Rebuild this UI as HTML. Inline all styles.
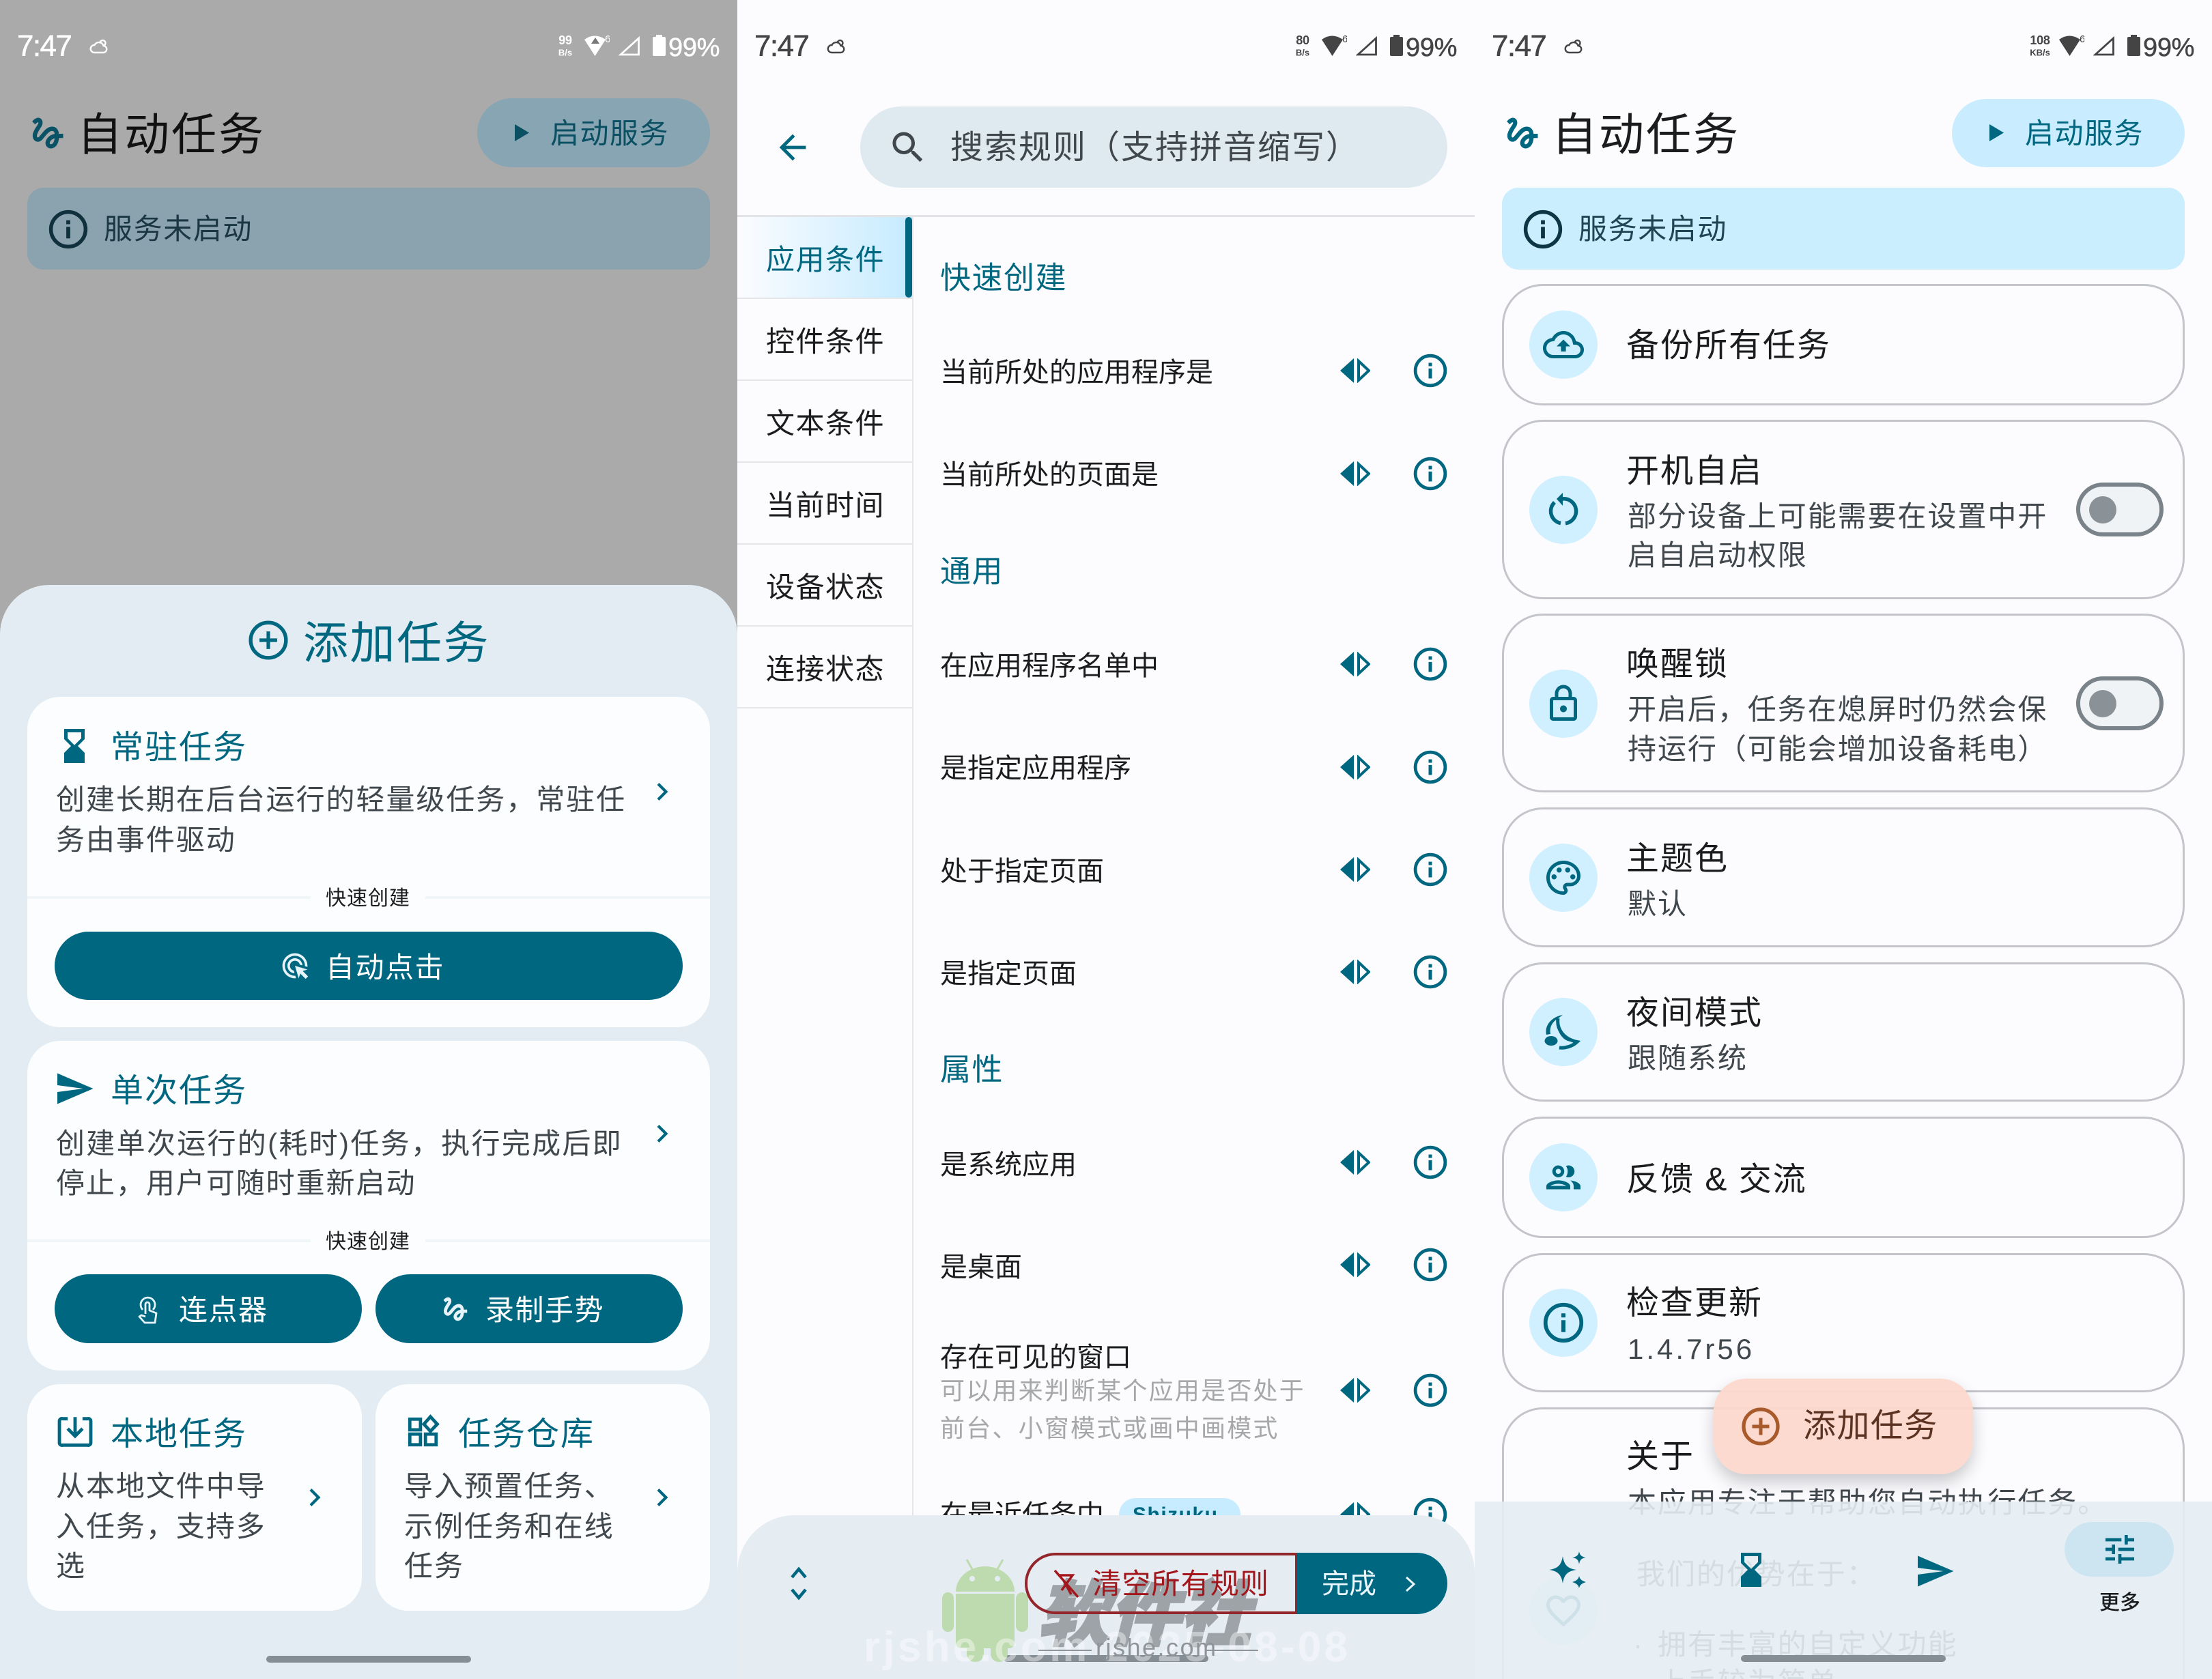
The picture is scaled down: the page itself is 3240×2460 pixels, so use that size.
<!DOCTYPE html>
<html><head><meta charset="utf-8"><style>
html,body{margin:0;padding:0;background:#fcfcff}
body{width:3240px;height:2460px;position:relative;overflow:hidden;font-family:"Liberation Sans","Noto Sans CJK SC",sans-serif;color:#1a1c1e}
.p{position:absolute;top:0;width:1080px;height:2460px;overflow:hidden;background:#fcfcff}
.t{position:absolute;white-space:nowrap;line-height:1;transform:translateY(calc(-50% + 2px))}
.b{position:absolute;box-sizing:border-box}
.i{position:absolute;fill:currentColor;overflow:visible}
.s{fill:none;stroke:currentColor}
.h66{font-size:66px;letter-spacing:3px}
.h48{font-size:48px;letter-spacing:2px}
.b42{font-size:42px;letter-spacing:1.95px;color:#41484d;transform:translateY(-50%)}
.w42{font-size:42px;letter-spacing:1.5px;color:#fff}
.pri{color:#006781}
.card{position:absolute;left:40px;width:1000px;background:#fbfdff;border-radius:48px}
.btn{position:absolute;background:#006781;border-radius:51px}
.dv{position:absolute;left:40px;width:1000px;height:4px;background:#f0f5f8}
.lb{position:absolute;left:455px;width:168px;height:40px;background:#fbfdff;text-align:center;font-size:30px;line-height:40px;color:#1a1c1e;letter-spacing:1px}
.o{position:absolute;left:40px;width:1000px;box-sizing:border-box;border:3px solid #c3c5ca;border-radius:60px}
.c{position:absolute;left:80px;width:100px;height:100px;border-radius:50%;background:#d0f0ff;color:#006781}
.r{font-size:40px;color:#1a1c1e;left:297px}
.g{font-size:45px;letter-spacing:1.5px;color:#006781;left:297px}
.side{position:absolute;left:0;width:256px;height:2px;background:#e4e6ea}
.st{left:42px;font-size:42px;letter-spacing:1.5px;color:#1a1c1e}
.home{position:absolute;left:390px;width:300px;height:10px;border-radius:5px;background:#858e94}
.time{left:25px;top:66px;font-size:44px;letter-spacing:-1.6px;-webkit-text-stroke:.5px currentColor}
.pct{left:979px;top:68px;font-size:38px;letter-spacing:-.3px;-webkit-text-stroke:.5px currentColor}
.sa{font-size:18px;font-weight:bold;text-align:center;letter-spacing:-.3px}
.sb{font-size:13px;font-weight:bold;text-align:center}
</style></head><body>
<svg width="0" height="0" style="position:absolute">
<defs>
<symbol id="info" viewBox="0 0 24 24"><circle cx="12" cy="12" r="10.500" fill="none" stroke="currentColor" stroke-width="2.300"/><rect x="10.800" y="10.500" width="2.400" height="7"/><rect x="10.800" y="6.500" width="2.400" height="2.400"/></symbol>
<symbol id="gest" viewBox="0 0 24 24"><path d="M4.590 6.890c.7-.71 1.400-1.350 1.710-1.220.5.2 0 1.030-.3 1.520-.25.42-2.860 3.890-2.860 6.310 0 1.280.48 2.340 1.340 2.980.75.56 1.740.73 2.640.46 1.070-.31 1.950-1.400 3.060-2.770 1.210-1.490 2.830-3.440 4.080-3.440 1.630 0 1.650 1.010 1.760 1.790-3.780.64-5.380 3.670-5.380 5.370 0 1.700 1.440 3.090 3.210 3.090 1.630 0 4.290-1.330 4.690-6.100H21v-2.500h-2.470c-.15-1.650-1.090-4.200-4.030-4.200-2.250 0-4.180 1.910-4.940 2.840-.58.73-2.060 2.480-2.290 2.720-.25.3-.68.84-1.110.84-.45 0-.72-.83-.36-1.920.35-1.090 1.400-2.860 1.850-3.520.78-1.140 1.300-1.920 1.300-3.280C8.950 3.690 7.310 3 6.440 3 5.120 3 3.970 4 3.720 4.250c-.36.36-.66.66-.88.93l1.750 1.710zm9.290 11.660c-.31 0-.74-.26-.74-.72 0-.6.73-2.200 2.870-2.760-.3 2.690-1.430 3.480-2.130 3.480z"/></symbol>
<symbol id="hour" viewBox="0 0 24 24"><path d="M18 22l-.01-6L14 12l3.990-4.010L18 2H6v6l4 4-4 3.990V22h12zM8 7.500V4h8v3.500l-4 4-4-4z"/></symbol>
<symbol id="send" viewBox="0 0 24 24"><path d="M2.010 21L23 12 2.010 3 2 10l15 2-15 2z"/></symbol>
<symbol id="add" viewBox="0 0 24 24"><circle cx="12" cy="12" r="10" fill="none" stroke="currentColor" stroke-width="2.100"/><path d="M11 7h2v4h4v2h-4v4h-2v-4H7v-2h4z"/></symbol>
<symbol id="chev" viewBox="0 0 18 28"><polyline points="3,2.500 14.500,14 3,25.500" fill="none" stroke="currentColor" stroke-width="4.200"/></symbol>
<symbol id="touch" viewBox="0 0 60 70"><path fill="none" stroke="currentColor" stroke-width="2.800" stroke-linejoin="round" d="M21 36A10.500 10.500 0 1 1 36 36M25 42V28a3 3 0 0 1 6 0V37L41 41 39 55H24L16 46 19 44 25 46"/></symbol>
<symbol id="ads" viewBox="0 0 24 24"><path d="M11.710,17.990C8.530,17.840,6,15.220,6,12c0-3.310,2.690-6,6-6c3.220,0,5.840,2.530,5.990,5.710l-2.100-0.630C15.480,9.310,13.890,8,12,8 c-2.210,0-4,1.790-4,4c0,1.890,1.310,3.480,3.080,3.890L11.710,17.990z M22,12c0,0.300-0.010,0.600-0.040,0.900l-1.970-0.590C20,12.210,20,12.100,20,12 c0-4.420-3.580-8-8-8s-8,3.580-8,8s3.580,8,8,8c0.100,0,0.210,0,0.310-0.010l0.590,1.970C12.600,21.990,12.300,22,12,22C6.480,22,2,17.520,2,12 C2,6.480,6.480,2,12,2S22,6.480,22,12z M18.230,16.260L22,15l-10-3l3,10l1.260-3.770l4.270,4.270l1.970-1.970L18.230,16.260z"/></symbol>
<symbol id="inbox" viewBox="0 0 24 24"><path fill="none" stroke="currentColor" stroke-width="2" d="M7.500 4H4.500A1.500 1.500 0 0 0 2.500 5.500v13A1.500 1.500 0 0 0 4.500 20h15a1.500 1.500 0 0 0 2-1.500v-13A1.500 1.500 0 0 0 19.500 4h-3M12 3v11M7.500 10l4.500 4.500 4.500-4.500"/></symbol>
<symbol id="widg" viewBox="0 0 24 24"><g fill="none" stroke="currentColor" stroke-width="2.300"><rect x="3" y="3.500" width="7.500" height="7.500"/><rect x="3" y="14" width="7.500" height="7.500"/><rect x="14" y="14" width="7.500" height="7.500"/><polygon points="17.500,1.800 22.300,7 17.500,12 12.900,7"/></g></symbol>
<symbol id="search" viewBox="0 0 24 24"><path d="M15.500 14h-.79l-.28-.27C15.410 12.590 16 11.110 16 9.500 16 5.910 13.090 3 9.500 3S3 5.910 3 9.500 5.910 16 9.500 16c1.610 0 3.090-.59 4.230-1.570l.27.28v.79l5 4.990L20.490 19l-4.990-5zm-6 0C7.010 14 5 11.990 5 9.500S7.010 5 9.500 5 14 7.010 14 9.500 11.990 14 9.500 14z"/></symbol>
<symbol id="back" viewBox="0 0 24 24"><path d="M20 11H7.830l5.590-5.590L12 4l-8 8 8 8 1.410-1.410L7.830 13H20v-2z"/></symbol>
<symbol id="swap" viewBox="0 0 44 36"><polygon points="20,0 20,36 0,18"/><polygon points="27,4 27,32 42,18" fill="none" stroke="currentColor" stroke-width="4"/></symbol>
<symbol id="cloud" viewBox="0 0 24 24"><path d="M19.350 10.040C18.670 6.590 15.640 4 12 4 9.110 4 6.600 5.640 5.350 8.040 2.340 8.360 0 10.910 0 14c0 3.310 2.690 6 6 6h13c2.760 0 5-2.240 5-5 0-2.640-2.050-4.780-4.650-4.960zM19 18H6c-2.210 0-4-1.790-4-4 0-2.050 1.530-3.760 3.560-3.970l1.070-.11.500-.95C8.080 7.140 9.940 6 12 6c2.620 0 4.880 1.860 5.390 4.430l.3 1.500 1.530.11c1.560.1 2.780 1.410 2.780 2.960 0 1.650-1.350 3-3 3zM8 13h2.550v3h2.900v-3H16l-4-4z"/></symbol>
<symbol id="replay" viewBox="0 0 120 120"><path fill="none" stroke="currentColor" stroke-width="5.500" d="M58 42A18 18 0 1 1 63 77.800M56 77.600A18 18 0 0 1 47 47"/><polygon points="59,33 59,52 50,42"/></symbol>
<symbol id="lock" viewBox="0 0 24 24"><path d="M18 8h-1V6c0-2.760-2.240-5-5-5S7 3.240 7 6v2H6c-1.100 0-2 .9-2 2v10c0 1.100.9 2 2 2h12c1.100 0 2-.9 2-2V10c0-1.100-.9-2-2-2zM9 6c0-1.660 1.340-3 3-3s3 1.340 3 3v2H9V6zm9 14H6V10h12v10zm-6-3c1.100 0 2-.9 2-2s-.9-2-2-2-2 .9-2 2 .9 2 2 2z"/></symbol>
<symbol id="pal" viewBox="0 0 24 24"><path d="M12 22C6.490 22 2 17.510 2 12S6.490 2 12 2s10 4.040 10 9c0 3.310-2.690 6-6 6h-1.770c-.28 0-.5.22-.5.500 0 .12.05.23.13.33.41.47.64 1.060.64 1.670 0 1.380-1.120 2.500-2.500 2.500zm0-18c-4.410 0-8 3.590-8 8s3.590 8 8 8c.28 0 .5-.22.5-.5 0-.16-.08-.28-.14-.35-.41-.46-.63-1.050-.63-1.650 0-1.380 1.120-2.500 2.500-2.500H16c2.210 0 4-1.790 4-4 0-3.860-3.590-7-8-7z"/><circle cx="6.500" cy="11.500" r="1.500"/><circle cx="9.500" cy="7.500" r="1.500"/><circle cx="14.500" cy="7.500" r="1.500"/><circle cx="17.500" cy="11.500" r="1.500"/></symbol>
<symbol id="moon" viewBox="0 0 120 120"><path d="M59 32C43 35 32 47 35 61L41 60C39 50 44 42 51 38 49 53 60 68 81 71 75 71 70 72 64 69 54 63 50 52 51 38Z" /><path fill="none" stroke="currentColor" stroke-width="5" d="M52 37C50 52 59 67 80 71.500C73 78 63 81 54 80"/><ellipse cx="42" cy="70" rx="9.500" ry="7"/></symbol>
<symbol id="ppl" viewBox="0 0 24 24"><path d="M9 13.750c-2.340 0-7 1.170-7 3.500V19h14v-1.750c0-2.330-4.660-3.500-7-3.500zM4.340 17c.84-.58 2.870-1.250 4.660-1.250s3.820.67 4.660 1.250H4.340zM9 12c1.930 0 3.500-1.570 3.500-3.500S10.930 5 9 5 5.500 6.570 5.500 8.500 7.070 12 9 12zm0-5c.83 0 1.500.67 1.500 1.500S9.830 10 9 10s-1.500-.67-1.500-1.500S8.170 7 9 7zm7.040 6.810c1.160.84 1.960 1.960 1.960 3.440V19h4v-1.750c0-2.020-3.500-3.170-5.960-3.440zM15 12c1.930 0 3.500-1.570 3.500-3.500S16.930 5 15 5c-.54 0-1.040.13-1.500.35.63.89 1 1.980 1 3.150s-.37 2.260-1 3.150c.46.22.96.35 1.500.35z"/></symbol>
<symbol id="heart" viewBox="0 0 24 24"><path d="M16.500 3c-1.740 0-3.410.81-4.500 2.090C10.910 3.810 9.240 3 7.500 3 4.420 3 2 5.420 2 8.500c0 3.780 3.400 6.860 8.550 11.540L12 21.350l1.450-1.320C18.600 15.360 22 12.280 22 8.500 22 5.420 19.580 3 16.500 3zm-4.400 15.550l-.1.100-.1-.1C7.140 14.240 4 11.390 4 8.500 4 6.500 5.500 5 7.500 5c1.540 0 3.040.99 3.570 2.360h1.870C13.460 5.990 14.960 5 16.500 5c2 0 3.500 1.500 3.500 3.500 0 2.890-3.140 5.740-7.900 10.050z"/></symbol>
<symbol id="tune" viewBox="0 0 24 24"><path d="M3 17v2h6v-2H3zM3 5v2h10V5H3zm10 16v-2h8v-2h-8v-2h-2v6h2zM7 9v2H3v2h4v2h2V9H7zm14 4v-2H11v2h10zm-6-4h2V7h4V5h-4V3h-2v6z"/></symbol>
<symbol id="spark" viewBox="0 0 54 54"><path d="M20 7 C22 20 27 25 40 27 C27 29 22 34 20 47 C18 34 13 29 0 27 C13 25 18 20 20 7z"/><path d="M44 0 C45 6 48 8 54 9 C48 10 45 12 44 19 C43 12 40 10 34 9 C40 8 43 6 44 0z"/><path d="M44 36 C45 41 48 43 54 45 C48 47 45 49 44 54 C43 49 40 47 34 45 C40 43 43 41 44 36z"/></symbol>
<symbol id="wcloud" viewBox="0 0 27 24"><path fill="none" stroke="currentColor" stroke-width="2.400" d="M7 22h13a5 5 0 0 0 .5-10 7 7 0 0 0-13-1A5.500 5.500 0 0 0 7 22zM15.500 7.500a4 4 0 1 1 6 4"/></symbol>
<symbol id="wifi" viewBox="0 0 37 32"><path d="M0 8 Q15 -3 31 8 L15.500 32 Z"/><text x="30" y="12" font-size="15" font-family="Liberation Sans">6</text></symbol>
<symbol id="sig" viewBox="0 0 32 29"><path fill="none" stroke="currentColor" stroke-width="2.800" d="M29.500 3V27H3z"/></symbol>
<symbol id="bat" viewBox="0 0 19 31"><path d="M5 0h9v3h3a2 2 0 0 1 2 2v24a2 2 0 0 1-2 2H2a2 2 0 0 1-2-2V5a2 2 0 0 1 2-2h3z"/></symbol>
</defs></svg>

<!-- PANEL 1 -->
<div class="p" style="left:0;background:#aaaaaa">
<div class="t time" style="color:#fff">7:47</div>
<svg class="i" style="left:131px;top:55px;width:27px;height:24px;color:#fff"><use href="#wcloud"/></svg>
<div class="t sa" style="left:812px;top:57px;color:#fff;width:32px">99</div>
<div class="t sb" style="left:812px;top:75px;color:#fff;width:32px">B/s</div>
<svg class="i" style="left:856px;top:50px;width:37px;height:32px;color:#fff"><use href="#wifi"/></svg>
<svg class="i" style="left:866px;top:55px;width:12px;height:9px;fill:#777"><polygon points="6,0 12,9 0,9"/></svg>
<svg class="i" style="left:906px;top:53px;width:32px;height:29px;color:#fff"><use href="#sig"/></svg>
<svg class="i" style="left:956px;top:51px;width:19px;height:31px;color:#fff"><use href="#bat"/></svg>
<div class="t pct" style="color:#fff">99%</div>

<svg class="i" style="left:40px;top:165px;width:60px;height:60px;color:#0a5266"><use href="#gest"/></svg>
<div class="t h66" style="left:113px;top:195px;color:#111">自动任务</div>
<div class="b" style="left:699px;top:144px;width:341px;height:101px;background:#88a5b3;border-radius:51px"></div>
<svg class="i" style="left:754px;top:182px;width:21px;height:25px;color:#0a4f62"><polygon points="0,0 21,12.500 0,25"/></svg>
<div class="t w42" style="left:806px;top:194px;color:#0a4f62">启动服务</div>
<div class="b" style="left:40px;top:275px;width:1000px;height:120px;background:#8ba3af;border-radius:24px"></div>
<svg class="i" style="left:71px;top:307px;width:58px;height:58px;color:#10303e"><use href="#info"/></svg>
<div class="t b42" style="left:152px;top:336px;color:#1b3744;letter-spacing:1.6px">服务未启动</div>

<div class="b" style="left:0;top:857px;width:1080px;height:1603px;background:#e2ecf2;border-radius:72px 72px 0 0"></div>
<svg class="i pri" style="left:362px;top:907px;width:62px;height:62px"><use href="#add"/></svg>
<div class="t h66 pri" style="left:444px;top:940px;letter-spacing:2.500px">添加任务</div>

<div class="card" style="top:1021px;height:484px"></div>
<svg class="i pri" style="left:79px;top:1063px;width:60px;height:60px"><use href="#hour"/></svg>
<div class="t h48 pri" style="left:162px;top:1094px">常驻任务</div>
<div class="t b42" style="left:82px;top:1172px">创建长期在后台运行的轻量级任务，常驻任</div>
<div class="t b42" style="left:82px;top:1231px">务由事件驱动</div>
<svg class="i pri" style="left:961px;top:1146px;width:18px;height:28px"><use href="#chev"/></svg>
<div class="dv" style="top:1313px"></div><div class="lb" style="top:1297px">快速创建</div>
<div class="btn" style="left:80px;top:1365px;width:920px;height:100px"></div>
<svg class="i" style="left:410px;top:1393px;width:44px;height:44px;color:#e6f4fa"><use href="#ads"/></svg>
<div class="t w42" style="left:477px;top:1416px">自动点击</div>

<div class="card" style="top:1525px;height:483px"></div>
<svg class="i pri" style="left:79px;top:1565px;width:60px;height:60px"><use href="#send"/></svg>
<div class="t h48 pri" style="left:162px;top:1597px">单次任务</div>
<div class="t b42" style="left:82px;top:1676px;letter-spacing:2.300px">创建单次运行的(耗时)任务，执行完成后即</div>
<div class="t b42" style="left:82px;top:1734px">停止，用户可随时重新启动</div>
<svg class="i pri" style="left:961px;top:1647px;width:18px;height:28px"><use href="#chev"/></svg>
<div class="dv" style="top:1816px"></div><div class="lb" style="top:1800px">快速创建</div>
<div class="btn" style="left:80px;top:1867px;width:450px;height:101px"></div>
<svg class="i" style="left:188px;top:1883px;width:60px;height:70px;color:#e6f4fa"><use href="#touch"/></svg>
<div class="t w42" style="left:262px;top:1918px">连点器</div>
<div class="btn" style="left:550px;top:1867px;width:450px;height:101px"></div>
<svg class="i" style="left:644px;top:1895px;width:46px;height:46px;color:#e6f4fa"><use href="#gest"/></svg>
<div class="t w42" style="left:711px;top:1918px">录制手势</div>

<div class="card" style="top:2028px;width:490px;height:332px"></div>
<svg class="i pri" style="left:81px;top:2069px;width:58px;height:58px"><use href="#inbox"/></svg>
<div class="t h48 pri" style="left:162px;top:2100px">本地任务</div>
<div class="t b42" style="left:82px;top:2178px">从本地文件中导</div>
<div class="t b42" style="left:82px;top:2237px">入任务，支持多</div>
<div class="t b42" style="left:82px;top:2295px">选</div>
<svg class="i pri" style="left:452px;top:2180px;width:18px;height:28px"><use href="#chev"/></svg>

<div class="card" style="top:2028px;left:550px;width:490px;height:332px"></div>
<svg class="i pri" style="left:594px;top:2072px;width:50px;height:50px"><use href="#widg"/></svg>
<div class="t h48 pri" style="left:671px;top:2100px">任务仓库</div>
<div class="t b42" style="left:592px;top:2178px">导入预置任务、</div>
<div class="t b42" style="left:592px;top:2237px">示例任务和在线</div>
<div class="t b42" style="left:592px;top:2295px">任务</div>
<svg class="i pri" style="left:961px;top:2180px;width:18px;height:28px"><use href="#chev"/></svg>
<div class="home" style="top:2426px"></div>
</div>

<!-- PANEL 2 -->
<div class="p" style="left:1080px">
<div class="t time" style="color:#444">7:47</div>
<svg class="i" style="left:131px;top:55px;width:27px;height:24px;color:#444"><use href="#wcloud"/></svg>
<div class="t sa" style="left:812px;top:57px;color:#444;width:32px">80</div>
<div class="t sb" style="left:812px;top:75px;color:#444;width:32px">B/s</div>
<svg class="i" style="left:856px;top:50px;width:37px;height:32px;color:#444"><use href="#wifi"/></svg>
<svg class="i" style="left:906px;top:53px;width:32px;height:29px;color:#444"><use href="#sig"/></svg>
<svg class="i" style="left:956px;top:51px;width:19px;height:31px;color:#444"><use href="#bat"/></svg>
<div class="t pct" style="color:#444">99%</div>

<svg class="i pri" style="left:52px;top:187px;width:58px;height:58px"><use href="#back"/></svg>
<div class="b" style="left:180px;top:156px;width:860px;height:119px;background:#dfeaf0;border-radius:60px"></div>
<svg class="i" style="left:220px;top:186px;width:60px;height:60px;color:#41484d"><use href="#search"/></svg>
<div class="t" style="left:312px;top:215px;font-size:48px;letter-spacing:2px;color:#41484d">搜索规则（支持拼音缩写）</div>
<div class="b" style="left:0;top:315px;width:1080px;height:3px;background:#e2e4e8"></div>
<div class="b" style="left:256px;top:318px;width:2px;height:1902px;background:#e4e6ea"></div>
<div class="b" style="left:0;top:318px;width:256px;height:118px;background:linear-gradient(90deg,#fcfcff,#c5ebff)"></div>
<div class="b" style="left:246px;top:318px;width:10px;height:118px;background:#006781;border-radius:5px"></div>
<div class="side" style="top:436px"></div><div class="side" style="top:556px"></div><div class="side" style="top:676px"></div><div class="side" style="top:796px"></div><div class="side" style="top:916px"></div><div class="side" style="top:1036px"></div>
<div class="t st pri" style="top:379px;color:#006781">应用条件</div>
<div class="t st" style="top:499px">控件条件</div>
<div class="t st" style="top:619px">文本条件</div>
<div class="t st" style="top:739px">当前时间</div>
<div class="t st" style="top:859px">设备状态</div>
<div class="t st" style="top:979px">连接状态</div>

<div class="t g" style="top:405px">快速创建</div>
<div class="t r" style="top:544px">当前所处的应用程序是</div>
<div class="t r" style="top:694px">当前所处的页面是</div>
<div class="t g" style="top:835px">通用</div>
<div class="t r" style="top:974px">在应用程序名单中</div>
<div class="t r" style="top:1124px">是指定应用程序</div>
<div class="t r" style="top:1275px">处于指定页面</div>
<div class="t r" style="top:1425px">是指定页面</div>
<div class="t g" style="top:1565px">属性</div>
<div class="t r" style="top:1705px">是系统应用</div>
<div class="t r" style="top:1855px">是桌面</div>
<div class="t r" style="top:1987px">存在可见的窗口</div>
<div class="t" style="left:297px;top:2036px;font-size:36px;letter-spacing:2.200px;color:#a5a7a9">可以用来判断某个应用是否处于</div>
<div class="t" style="left:297px;top:2091px;font-size:36px;letter-spacing:2.200px;color:#a5a7a9">前台、小窗模式或画中画模式</div>
<div class="t r" style="top:2218px">在最近任务中</div>
<div class="b" style="left:559px;top:2195px;width:178px;height:60px;background:#c8ecff;border-radius:24px"></div>
<div class="t" style="left:579px;top:2218px;font-size:30px;font-weight:bold;letter-spacing:1.500px;color:#006781">Shizuku</div>

<svg class="i pri" style="left:883px;top:525px;width:44px;height:36px"><use href="#swap"/></svg><svg class="i pri" style="left:988px;top:518px;width:54px;height:50px"><use href="#info"/></svg>
<svg class="i pri" style="left:883px;top:676px;width:44px;height:36px"><use href="#swap"/></svg><svg class="i pri" style="left:988px;top:669px;width:54px;height:50px"><use href="#info"/></svg>
<svg class="i pri" style="left:883px;top:955px;width:44px;height:36px"><use href="#swap"/></svg><svg class="i pri" style="left:988px;top:948px;width:54px;height:50px"><use href="#info"/></svg>
<svg class="i pri" style="left:883px;top:1106px;width:44px;height:36px"><use href="#swap"/></svg><svg class="i pri" style="left:988px;top:1099px;width:54px;height:50px"><use href="#info"/></svg>
<svg class="i pri" style="left:883px;top:1256px;width:44px;height:36px"><use href="#swap"/></svg><svg class="i pri" style="left:988px;top:1249px;width:54px;height:50px"><use href="#info"/></svg>
<svg class="i pri" style="left:883px;top:1406px;width:44px;height:36px"><use href="#swap"/></svg><svg class="i pri" style="left:988px;top:1399px;width:54px;height:50px"><use href="#info"/></svg>
<svg class="i pri" style="left:883px;top:1685px;width:44px;height:36px"><use href="#swap"/></svg><svg class="i pri" style="left:988px;top:1678px;width:54px;height:50px"><use href="#info"/></svg>
<svg class="i pri" style="left:883px;top:1835px;width:44px;height:36px"><use href="#swap"/></svg><svg class="i pri" style="left:988px;top:1828px;width:54px;height:50px"><use href="#info"/></svg>
<svg class="i pri" style="left:883px;top:2019px;width:44px;height:36px"><use href="#swap"/></svg><svg class="i pri" style="left:988px;top:2012px;width:54px;height:50px"><use href="#info"/></svg>
<svg class="i pri" style="left:883px;top:2201px;width:44px;height:36px"><use href="#swap"/></svg><svg class="i pri" style="left:988px;top:2194px;width:54px;height:50px"><use href="#info"/></svg>

<div class="b" style="left:0;top:2220px;width:1080px;height:240px;background:#e5edf3;border-radius:84px 84px 0 0"></div>
<svg class="i pri" style="left:78px;top:2296px;width:24px;height:48px"><polyline points="2,15 12,3 22,15" fill="none" stroke="currentColor" stroke-width="4.500"/><polyline points="2,33 12,45 22,33" fill="none" stroke="currentColor" stroke-width="4.500"/></svg>
<div class="home" style="top:2425px"></div>
<svg class="i" style="left:300px;top:2285px;width:126px;height:150px;fill:#bddbae"><path d="M20 47A43 37 0 0 1 106 47Z"/><path d="M36 0 44 14M89 0 81 14" stroke="#bddbae" stroke-width="3" fill="none"/><path d="M20 50H106V122a8 8 0 0 1-8 8H28a8 8 0 0 1-8-8Z"/><rect x="0" y="48" width="17" height="58" rx="8.500"/><rect x="108" y="48" width="18" height="58" rx="9"/><rect x="36" y="118" width="25" height="32" rx="12"/><rect x="71" y="118" width="25" height="32" rx="12"/><circle cx="44" cy="28" r="4" fill="#e5edf3"/><circle cx="81" cy="28" r="4" fill="#e5edf3"/></svg>
<div class="t" style="left:440px;top:2355px;font-size:104px;font-weight:900;font-style:italic;color:#9ea3a8;-webkit-text-stroke:3px #9ea3a8;font-family:'Noto Sans CJK SC',sans-serif">软件社</div>
<div class="t" style="left:185px;top:2412px;font-size:62px;font-weight:bold;letter-spacing:4.300px;color:rgba(255,255,255,.42)">rjshe.com 2025-08-08</div>
<div class="b" style="left:441px;top:2417px;width:78px;height:2px;background:#8f9498"></div>
<div class="t" style="left:525px;top:2412px;font-size:36px;letter-spacing:2.500px;color:#8f9498">rjshe.com</div>
<div class="b" style="left:685px;top:2417px;width:78px;height:2px;background:#8f9498"></div>

<div class="b" style="left:421px;top:2275px;width:400px;height:90px;border:4px solid #93262b;border-right-width:4px;border-radius:45px 0 0 45px"></div>
<svg class="i" style="left:463px;top:2300px;width:40px;height:42px;color:#a3171c"><path fill="none" stroke="currentColor" stroke-width="3.500" d="M2 1L36 40M8 8H28L12 30M14 14 26 36"/></svg>
<div class="t" style="left:520px;top:2319px;font-size:42px;letter-spacing:1.200px;color:#a3171c">清空所有规则</div>
<div class="b" style="left:820px;top:2275px;width:220px;height:90px;background:#006781;border-radius:0 45px 45px 0"></div>
<div class="t" style="left:856px;top:2319px;font-size:40px;color:#eaf6fb">完成</div>
<svg class="i" style="left:978px;top:2310px;width:15px;height:22px;color:#eaf6fb"><polyline points="2,1 13,11 2,21" fill="none" stroke="currentColor" stroke-width="3"/></svg>
</div>

<!-- PANEL 3 -->
<div class="p" style="left:2160px">
<div class="t time" style="color:#444">7:47</div>
<svg class="i" style="left:131px;top:55px;width:27px;height:24px;color:#444"><use href="#wcloud"/></svg>
<div class="t sa" style="left:808px;top:57px;color:#444;width:40px">108</div>
<div class="t sb" style="left:808px;top:75px;color:#444;width:40px">KB/s</div>
<svg class="i" style="left:856px;top:50px;width:37px;height:32px;color:#444"><use href="#wifi"/></svg>
<svg class="i" style="left:906px;top:53px;width:32px;height:29px;color:#444"><use href="#sig"/></svg>
<svg class="i" style="left:956px;top:51px;width:19px;height:31px;color:#444"><use href="#bat"/></svg>
<div class="t pct" style="color:#444">99%</div>

<svg class="i pri" style="left:40px;top:165px;width:60px;height:60px"><use href="#gest"/></svg>
<div class="t h66" style="left:113px;top:195px">自动任务</div>
<div class="b" style="left:699px;top:145px;width:341px;height:100px;background:#c9edff;border-radius:50px"></div>
<svg class="i pri" style="left:754px;top:182px;width:21px;height:25px"><polygon points="0,0 21,12.500 0,25"/></svg>
<div class="t w42 pri" style="left:806px;top:194px;color:#006781">启动服务</div>
<div class="b" style="left:40px;top:275px;width:1000px;height:120px;background:#cbeeff;border-radius:24px"></div>
<svg class="i" style="left:71px;top:307px;width:58px;height:58px;color:#0d3645"><use href="#info"/></svg>
<div class="t b42" style="left:152px;top:336px;color:#1f4552;letter-spacing:1.6px">服务未启动</div>

<div class="o" style="top:416px;height:178px"></div>
<div class="c" style="top:455px"></div>
<svg class="i pri" style="left:100px;top:475px;width:60px;height:60px"><use href="#cloud"/></svg>
<div class="t h48" style="left:222px;top:505px">备份所有任务</div>

<div class="o" style="top:615px;height:263px"></div>
<div class="c" style="top:697px"></div>
<svg class="i pri" style="left:70px;top:689px;width:120px;height:120px"><use href="#replay"/></svg>
<div class="t h48" style="left:222px;top:689px">开机自启</div>
<div class="t b42" style="left:224px;top:757px">部分设备上可能需要在设置中开</div>
<div class="t b42" style="left:224px;top:814px">启自启动权限</div>
<div class="b" style="left:881px;top:707px;width:128px;height:79px;border:6px solid #7a8389;border-radius:40px;background:#eff3f6"></div>
<div class="b" style="left:900px;top:727px;width:40px;height:40px;border-radius:50%;background:#8a9298"></div>

<div class="o" style="top:899px;height:262px"></div>
<div class="c" style="top:981px"></div>
<svg class="i pri" style="left:100px;top:1001px;width:60px;height:60px"><use href="#lock"/></svg>
<div class="t h48" style="left:222px;top:972px">唤醒锁</div>
<div class="t b42" style="left:224px;top:1040px">开启后，任务在熄屏时仍然会保</div>
<div class="t b42" style="left:224px;top:1098px">持运行（可能会增加设备耗电）</div>
<div class="b" style="left:881px;top:991px;width:128px;height:79px;border:6px solid #7a8389;border-radius:40px;background:#eff3f6"></div>
<div class="b" style="left:900px;top:1011px;width:40px;height:40px;border-radius:50%;background:#8a9298"></div>

<div class="o" style="top:1183px;height:205px"></div>
<div class="c" style="top:1236px"></div>
<svg class="i pri" style="left:100px;top:1256px;width:60px;height:60px"><use href="#pal"/></svg>
<div class="t h48" style="left:222px;top:1257px">主题色</div>
<div class="t b42" style="left:224px;top:1325px">默认</div>

<div class="o" style="top:1410px;height:204px"></div>
<div class="c" style="top:1462px"></div>
<svg class="i pri" style="left:70px;top:1455px;width:120px;height:120px"><use href="#moon"/></svg>
<div class="t h48" style="left:222px;top:1483px">夜间模式</div>
<div class="t b42" style="left:224px;top:1551px">跟随系统</div>

<div class="o" style="top:1636px;height:178px"></div>
<div class="c" style="top:1675px"></div>
<svg class="i pri" style="left:100px;top:1695px;width:60px;height:60px"><use href="#ppl"/></svg>
<div class="t h48" style="left:222px;top:1727px">反馈 &amp; 交流</div>

<div class="o" style="top:1836px;height:204px"></div>
<div class="c" style="top:1888px"></div>
<svg class="i pri" style="left:100px;top:1908px;width:60px;height:60px"><use href="#info"/></svg>
<div class="t h48" style="left:222px;top:1908px">检查更新</div>
<div class="t b42" style="left:224px;top:1977px;letter-spacing:4px">1.4.7r56</div>

<div class="o" style="top:2062px;height:500px"></div>
<div class="c" style="top:2310px"></div>
<svg class="i pri" style="left:100px;top:2330px;width:60px;height:60px"><use href="#heart"/></svg>
<div class="t h48" style="left:222px;top:2133px">关于</div>
<div class="t b42" style="left:224px;top:2202px">本应用专注于帮助您自动执行任务。</div>
<div class="t b42" style="left:237px;top:2307px">我们的优势在于：</div>
<div class="t b42" style="left:232px;top:2410px">·</div><div class="t b42" style="left:268px;top:2410px">拥有丰富的自定义功能</div>
<div class="t b42" style="left:232px;top:2466px">·</div><div class="t b42" style="left:268px;top:2466px">上手较为简单</div>

<div class="b" style="left:350px;top:2020px;width:380px;height:140px;background:rgba(252,216,204,.95);border-radius:48px;box-shadow:0 12px 24px rgba(0,0,0,.2)"></div>
<svg class="i" style="left:389px;top:2060px;width:60px;height:60px;color:#a95a2b"><use href="#add"/></svg>
<div class="t h48" style="left:481px;top:2088px;color:#5c3322;letter-spacing:1.400px">添加任务</div>

<div class="b" style="left:0;top:2200px;width:1080px;height:260px;background:rgba(228,237,243,.9)"></div>
<svg class="i pri" style="left:109px;top:2273px;width:54px;height:54px"><use href="#spark"/></svg>
<svg class="i pri" style="left:375px;top:2270px;width:60px;height:60px"><use href="#hour"/></svg>
<svg class="i pri" style="left:644px;top:2272px;width:60px;height:60px"><use href="#send"/></svg>
<div class="b" style="left:864px;top:2230px;width:160px;height:80px;background:#cde5f0;border-radius:40px"></div>
<svg class="i pri" style="left:917px;top:2242px;width:56px;height:56px"><use href="#tune"/></svg>
<div class="t" style="left:915px;top:2347px;font-size:30px;font-weight:500;color:#1a1c1e">更多</div>
<div class="home" style="top:2425px"></div>
</div>
</body></html>
